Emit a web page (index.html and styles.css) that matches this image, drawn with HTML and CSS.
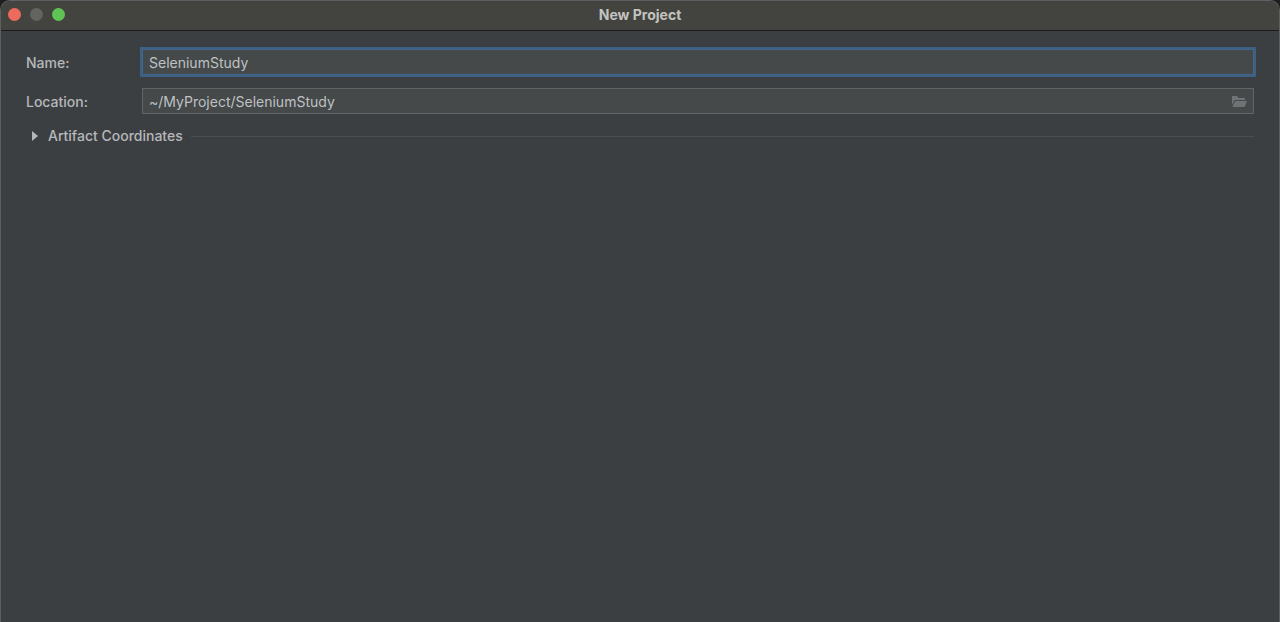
FILE: index.html
```html
<!DOCTYPE html>
<html lang="en">
<head>
    <meta charset="UTF-8">
    <meta name="viewport" content="width=device-width, initial-scale=1.0">
    <title>New Project</title>
    <link rel="stylesheet" href="styles.css">
</head>
<body>

    <div class="window">
        <header class="titlebar">
            <div class="window-buttons">
                <button class="window-button close" type="button" aria-label="Close"></button>
                <button class="window-button minimize" type="button" aria-label="Minimize" disabled></button>
                <button class="window-button maximize" type="button" aria-label="Maximize"></button>
            </div>
            <h1 class="title">New Project</h1>
        </header>

        <form class="project-form">
            <div class="row">
                <label class="label" for="name">Name:</label>
                <div class="field field-active">
                    <input class="input" id="name" type="text" value="SeleniumStudy" spellcheck="false">
                </div>
            </div>
            <div class="row">
                <label class="label" for="location">Location:</label>
                <div class="field">
                    <input class="input" id="location" type="text" value="~/MyProject/SeleniumStudy" spellcheck="false">
                    <button class="browse" type="button" aria-label="Browse">
                        <svg width="16" height="14" viewBox="0 0 16 14" fill="#6f7375">
                            <path d="M1 2h5l1.5 2H14v2H3.6L1 11z"/>
                            <path d="M4.2 7H16l-2.4 6H1.4z"/>
                        </svg>
                    </button>
                </div>
            </div>

            <button class="section" type="button" aria-expanded="false">
                <svg class="arrow" width="6" height="10" viewBox="0 0 6 10" fill="#b4b7b9">
                    <path d="M0 0l6 5-6 5z"/>
                </svg>
                <span>Artifact Coordinates</span>
                <span class="section-line"></span>
            </button>
        </form>
    </div>

</body>
</html>
```
FILE: styles.css
```css
* {
    box-sizing: border-box;
}

body {
    margin: 0;
    background-color: #1e1e1e;
    font-family: Inter, "Liberation Sans", sans-serif;
    font-size: 14px;
    font-weight: 500;
    line-height: 20px;
    color: #b6b8ba;
}

button,
input {
    font: inherit;
    color: inherit;
    padding: 0;
    border: none;
    background: none;
}

.window {
    min-height: 100vh;
    background-color: #3c3f42;
    border: 1px solid #5c5f61;
    border-bottom: none;
    border-radius: 10px 10px 0 0;
    overflow: hidden;
}

/* title bar */
.titlebar {
    display: grid;
    grid-template-columns: 1fr auto 1fr;
    align-items: center;
    height: 30px;
    padding: 0 7px 2px;
    background-color: #43443f;
    border-bottom: 1px solid #1c1d1b;
}

.window-buttons {
    display: flex;
    gap: 9px;
}

.window-button {
    width: 13px;
    height: 13px;
    border-radius: 50%;
}

.close {
    background-color: #ed6a5e;
}

.minimize {
    background-color: #63645f;
}

.maximize {
    background-color: #5fc454;
}

.title {
    margin: 0;
    font-size: 14px;
    font-weight: 700;
    color: #c3c3c0;
}

/* form */
.project-form {
    padding: 18px 25px;
}

.row {
    display: flex;
    align-items: center;
    margin-bottom: 12px;
}

.row:first-child {
    margin-bottom: 13px;
}

.label {
    width: 116px;
    padding-top: 2px;
}

.field {
    flex: 1;
    display: flex;
    align-items: center;
    height: 26px;
    padding: 0 6px;
    background-color: #45494a;
    border: 1px solid #626567;
}

.field-active {
    border-color: #43658c;
    box-shadow: 0 0 0 2px #3d6185;
}

.input {
    flex: 1;
    min-width: 0;
    height: 24px;
    padding-top: 1px;
    font-weight: 400;
    color: #bfc1c3;
    outline: none;
}

.browse {
    display: flex;
}

.section {
    display: flex;
    align-items: center;
    width: 100%;
    padding-left: 6px;
}

.arrow {
    margin-right: 10px;
}

.section-line {
    flex: 1;
    height: 1px;
    margin-left: 8px;
    background-color: #4b4e51;
}
```
